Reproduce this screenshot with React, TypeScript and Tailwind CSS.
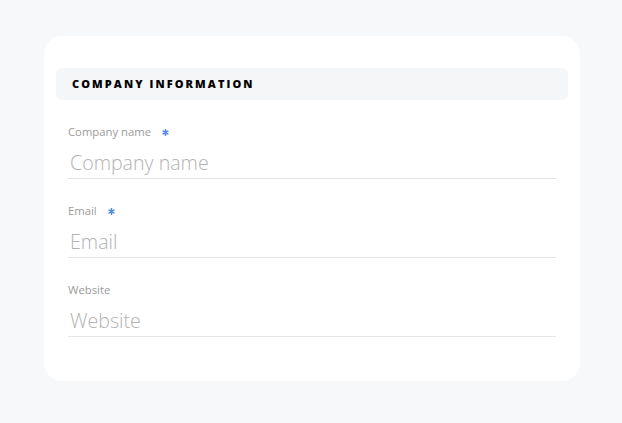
import React from "react";

const fields = [
  { id: "company", label: "Company name", required: true },
  { id: "email", label: "Email", required: true },
  { id: "website", label: "Website", required: false },
];

function Asterisk() {
  return (
    <svg viewBox="0 0 10 10" className="ml-[11px] w-[7px] h-[7px] text-[#4f86e0]" fill="none" stroke="currentColor" strokeWidth="2.2" strokeLinecap="round">
      <path d="M5 1v8M1.6 3l6.8 4M1.6 7l6.8-4" />
    </svg>
  );
}

function Field({ label, required }: { label: string; required: boolean }) {
  return (
    <div className="flex flex-col">
      <label className="flex items-center h-4 text-[11.3px] text-[#9b9b9b] leading-4">
        {label}
        {required && <Asterisk />}
      </label>
      <input
        placeholder={label}
        className="mt-2 h-[31px] pl-[2px] pb-[2px] border-b border-[#e4e4e6] bg-transparent text-[19.6px] font-light text-[#333] placeholder:text-[#b2b2b2] outline-none"
      />
    </div>
  );
}

export default function App() {
  return (
    <div
      className="w-[622px] h-[423px] bg-[#f7f8fa] pt-9 pl-11"
      style={{ fontFamily: "'Open Sans', Lato, sans-serif" }}
    >
      <div className="w-[536px] bg-white rounded-[18px] pt-8 px-3 pb-[44px]">
        <div className="h-8 rounded-md bg-[#f5f6f8] px-4 flex items-center">
          <h2 className="text-[11px] font-extrabold tracking-[0.19em] text-black">
            COMPANY INFORMATION
          </h2>
        </div>
        {/* fields */}
        <div className="mt-6 px-3 flex flex-col gap-[24px]">
          {fields.map((f) => (
            <Field key={f.id} label={f.label} required={f.required} />
          ))}
        </div>
      </div>
    </div>
  );
}
